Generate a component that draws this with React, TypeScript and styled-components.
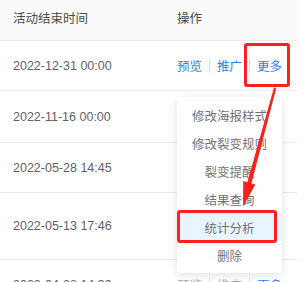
import React from "react";
import styled, { createGlobalStyle } from "styled-components";

const rows = [
  { date: "2022-12-31 00:00", height: 49, faded: false },
  { date: "2022-11-16 00:00", height: 51, faded: false },
  { date: "2022-05-28 14:45", height: 49, faded: false },
  { date: "2022-05-13 17:46", height: 66, faded: false },
  { date: "2022-04-28 14:30", height: 49, faded: true },
];

const menuItems = [
  "修改海报样式",
  "修改裂变规则",
  "裂变提醒",
  "结果查询",
  "统计分析",
  "删除",
];

const App = () => {
  return (
    <Page>
      <GlobalStyle />
      <Table>
        <HeaderRow>
          <DateCell>活动结束时间</DateCell>
          <ActionCell>操作</ActionCell>
        </HeaderRow>
        {rows.map((row) => (
          <Row key={row.date} $height={row.height}>
            <DateCell>{row.date}</DateCell>
            <ActionCell>
              <ActionLink $muted={row.faded}>预览</ActionLink>
              <Divider />
              <ActionLink $muted={row.faded}>推广</ActionLink>
              <Divider />
              <ActionLink>更多</ActionLink>
            </ActionCell>
          </Row>
        ))}
      </Table>

      <Dropdown>
        {menuItems.map((item) => (
          <MenuItem key={item} $active={item === "统计分析"}>
            {item}
          </MenuItem>
        ))}
      </Dropdown>

      <Highlight $left={244} $top={43} $width={46} $height={44} />
      <Highlight $left={177} $top={210} $width={100} $height={33} />

      <ArrowLayer width="308" height="282" viewBox="0 0 308 282">
        <polygon
          points="274,87.6 276.2,88.3 251.4,183.4 255.4,184.6 243,206.5 243.2,181 247.3,182.2"
          fill="#ff2119"
        />
      </ArrowLayer>
    </Page>
  );
};

const GlobalStyle = createGlobalStyle`
  html, body {
    margin: 0;
    padding: 0;
    background: #fff;
  }
  body {
    font-family: "Liberation Sans", "Noto Sans CJK SC", sans-serif;
  }
`;

const Page = styled.div`
  position: relative;
  width: 308px;
  height: 282px;
  overflow: hidden;
  background: #fff;
`;

const Table = styled.div`
  width: 297px;
  display: flex;
  flex-direction: column;
`;

const HeaderRow = styled.div`
  height: 40px;
  flex-shrink: 0;
  display: flex;
  align-items: center;
  padding-bottom: 6px;
  box-sizing: content-box;
  height: 34px;
  background: #fafafa;
  border-bottom: 1px solid #ebebeb;
  color: #4a4a4a;
  font-size: 12.5px;
`;

const Row = styled.div<{ $height: number }>`
  height: ${(p) => p.$height}px;
  flex-shrink: 0;
  display: flex;
  align-items: center;
  border-bottom: 1px solid #ebebeb;
  color: #5f6166;
  font-size: 12.5px;
`;

const DateCell = styled.div`
  width: 177px;
  padding-left: 13px;
  box-sizing: border-box;
  white-space: nowrap;
`;

const ActionCell = styled.div`
  flex: 1;
  display: flex;
  align-items: center;
  font-size: 12.5px;
`;

const ActionLink = styled.span<{ $muted?: boolean }>`
  color: ${(p) => (p.$muted ? "#a9adb5" : "#2f7cf6")};
  cursor: pointer;
`;

const Divider = styled.span`
  width: 1px;
  height: 14px;
  margin: 0 7px;
  background: #dcdfe6;
`;

const Dropdown = styled.div`
  position: absolute;
  left: 177px;
  top: 97px;
  width: 105px;
  padding: 4px 0;
  background: #fff;
  border-radius: 4px;
  box-shadow: 0 2px 10px rgba(0, 0, 0, 0.12);
  display: flex;
  flex-direction: column;
`;

const MenuItem = styled.div<{ $active?: boolean }>`
  height: 28px;
  display: flex;
  align-items: center;
  justify-content: center;
  font-size: 12.5px;
  color: #707378;
  background: ${(p) => (p.$active ? "#e8f5ff" : "transparent")};
`;

const Highlight = styled.div<{
  $left: number;
  $top: number;
  $width: number;
  $height: number;
}>`
  position: absolute;
  left: ${(p) => p.$left}px;
  top: ${(p) => p.$top}px;
  width: ${(p) => p.$width}px;
  height: ${(p) => p.$height}px;
  box-sizing: border-box;
  border: 3px solid #ff2121;
  border-radius: 3px;
`;

const ArrowLayer = styled.svg`
  position: absolute;
  left: 0;
  top: 0;
  pointer-events: none;
`;

export default App;
